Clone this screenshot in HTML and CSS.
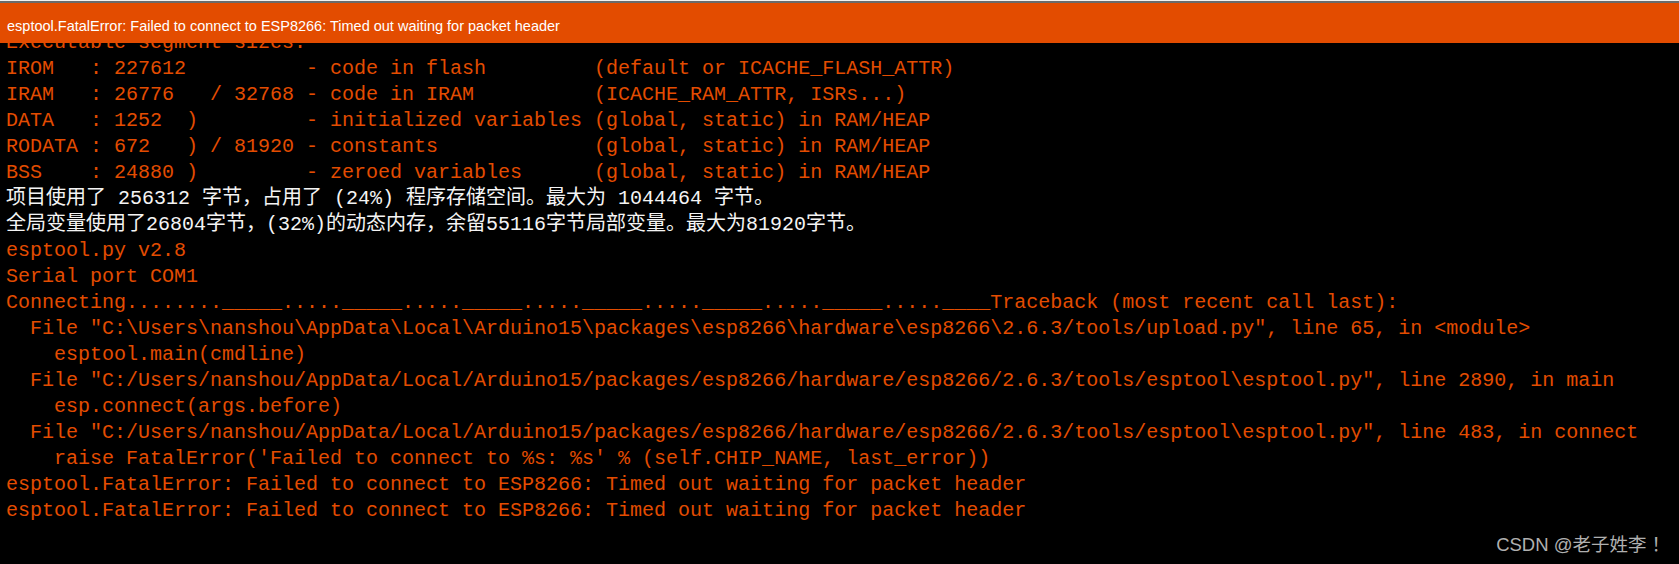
FILE: index.html
```html
<!DOCTYPE html>
<html lang="zh-CN">
<head>
<meta charset="utf-8">
<title>esptool</title>
<link rel="stylesheet" href="styles.css">
</head>
<body>
<div class="window">
  <div class="status">esptool.FatalError: Failed to connect to ESP8266: Timed out waiting for packet header</div>
  <div class="console">
<pre class="log"><span class="err">Executable segment sizes:</span>
<span class="err">IROM   : 227612          - code in flash         (default or ICACHE_FLASH_ATTR)</span>
<span class="err">IRAM   : 26776   / 32768 - code in IRAM          (ICACHE_RAM_ATTR, ISRs...)</span>
<span class="err">DATA   : 1252  )         - initialized variables (global, static) in RAM/HEAP</span>
<span class="err">RODATA : 672   ) / 81920 - constants             (global, static) in RAM/HEAP</span>
<span class="err">BSS    : 24880 )         - zeroed variables      (global, static) in RAM/HEAP</span>
<span class="out">项目使用了 256312 字节，占用了 (24%) 程序存储空间。最大为 1044464 字节。</span>
<span class="out">全局变量使用了26804字节，(32%)的动态内存，余留55116字节局部变量。最大为81920字节。</span>
<span class="err">esptool.py v2.8</span>
<span class="err">Serial port COM1</span>
<span class="err">Connecting........_____....._____....._____....._____....._____....._____.....____Traceback (most recent call last):</span>
<span class="err">  File "C:\Users\nanshou\AppData\Local\Arduino15\packages\esp8266\hardware\esp8266\2.6.3/tools/upload.py", line 65, in &lt;module&gt;</span>
<span class="err">    esptool.main(cmdline)</span>
<span class="err">  File "C:/Users/nanshou/AppData/Local/Arduino15/packages/esp8266/hardware/esp8266/2.6.3/tools/esptool\esptool.py", line 2890, in main</span>
<span class="err">    esp.connect(args.before)</span>
<span class="err">  File "C:/Users/nanshou/AppData/Local/Arduino15/packages/esp8266/hardware/esp8266/2.6.3/tools/esptool\esptool.py", line 483, in connect</span>
<span class="err">    raise FatalError('Failed to connect to %s: %s' % (self.CHIP_NAME, last_error))</span>
<span class="err">esptool.FatalError: Failed to connect to ESP8266: Timed out waiting for packet header</span>
<span class="err">esptool.FatalError: Failed to connect to ESP8266: Timed out waiting for packet header</span>
</pre>
  </div>
  <div class="watermark">CSDN @老子姓李<span class="bang">！</span></div>
</div>
</body>
</html>
```

FILE: styles.css
```css
html, body {
  margin: 0;
  padding: 0;
  background: #000;
}

.window {
  position: relative;
  width: 1679px;
  height: 564px;
  display: flex;
  flex-direction: column;
  background: #000;
  border-top: 1px solid #f2f2f2;
  box-sizing: border-box;
  overflow: hidden;
}

.status {
  flex: none;
  box-sizing: border-box;
  border-top: 2px solid #6b6b6b;
  height: 42px;
  padding: 6px 0 0 7px;
  line-height: 34px;
  background: #e34c00;
  color: #ffffff;
  font-family: "Liberation Sans", Arial, sans-serif;
  font-size: 14.5px;
  white-space: nowrap;
}

.console {
  flex: 1;
  min-height: 0;
  overflow: hidden;
  background: #000;
}

.log {
  margin: -13px 0 0 0;
  padding: 0 0 0 6px;
  font-family: "Liberation Mono", "Courier New", "Noto Sans CJK SC", monospace;
  font-size: 20px;
  line-height: 26px;
  white-space: pre;
}

.err {
  color: #e34c00;
}

.out {
  color: #f4f4f4;
}

.watermark {
  position: absolute;
  right: 9px;
  bottom: 9px;
  font-family: "Liberation Sans", Arial, "Noto Sans CJK TC", sans-serif;
  font-size: 18.5px;
  line-height: 20px;
  color: #b0b0b0;
  white-space: nowrap;
}

.watermark .bang {
  margin-left: 5px;
}
```
